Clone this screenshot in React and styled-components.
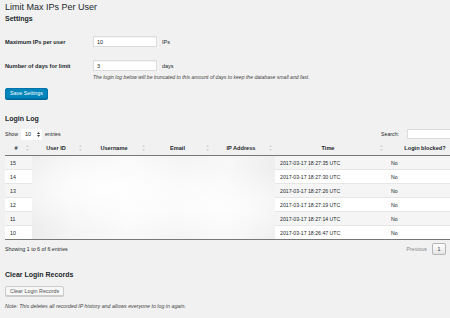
import React from "react";
import styled, { createGlobalStyle } from "styled-components";

const GlobalStyle = createGlobalStyle`
	body {
		margin: 0;
		background: #f1f1f1;
		overflow: hidden;
		font-family: "Liberation Sans", Arial, sans-serif;
		color: #23282d;
	}
`;

const Page = styled.div`
	width: 465px;
	padding-left: 5px;
`;

const Title = styled.h1`
	margin: 1px 0 0;
	font-size: 9px;
	font-weight: 400;
	line-height: 12px;
`;

const SectionTitle = styled.h2`
	margin: ${(p) => p.$top}px 0 0;
	font-size: 7px;
	font-weight: 700;
	line-height: 9px;
`;

const FormRow = styled.div`
	display: flex;
	align-items: center;
	height: 11px;
	margin-top: 13px;
	font-size: 5.5px;
`;

const Label = styled.label`
	width: 88px;
	font-weight: 700;
	font-size: 5.7px;
`;

const TextInput = styled.div`
	box-sizing: border-box;
	width: 64px;
	height: 11px;
	padding: 0 3px;
	background: #fff;
	border: 1px solid #ddd;
	box-shadow: inset 0 1px 1px rgba(0, 0, 0, 0.05);
	display: flex;
	align-items: center;
`;

const Unit = styled.span`
	margin-left: 5px;
`;

const Hint = styled.p`
	margin: 3px 0 0;
	padding-left: 88px;
	font-size: 5.1px;
	font-style: italic;
	line-height: 6px;
	color: #444;
`;

const PrimaryButton = styled.button`
	display: block;
	box-sizing: border-box;
	margin-top: 8px;
	height: 11px;
	padding: 0 4px;
	background: #0085ba;
	border: 1px solid #0073aa;
	border-radius: 2px;
	box-shadow: 0 1px 0 #006799;
	color: #fff;
	font-family: inherit;
	font-size: 5.35px;
	line-height: 9px;
`;

const Controls = styled.div`
	display: flex;
	justify-content: space-between;
	align-items: center;
	width: 464px;
	height: 12px;
	margin-top: 5px;
	font-size: 5.2px;
`;

const Inline = styled.div`
	display: flex;
	align-items: center;
`;

const SelectBox = styled.div`
	box-sizing: border-box;
	width: 21px;
	height: 11px;
	margin: 0 3px;
	padding: 0 2px 0 4px;
	background: #fff;
	border-radius: 2px;
	display: flex;
	align-items: center;
	justify-content: space-between;
	font-size: 5.5px;
`;

const SearchInput = styled.div`
	box-sizing: border-box;
	width: 62px;
	height: 10px;
	margin-left: 8px;
	background: #fff;
	border: 1px solid #ddd;
`;

const Table = styled.table`
	margin-top: 1px;
	width: 464px;
	border-collapse: separate;
	border-spacing: 0;
	table-layout: fixed;
	font-size: 5.2px;
`;

const Th = styled.th`
	box-sizing: border-box;
	width: ${(p) => p.$w}px;
	height: 15px;
	padding: 0 3px;
	border-bottom: 1px solid #777;
	font-size: 5.6px;
	font-weight: 700;
`;

const HeadInner = styled.div`
	display: grid;
	grid-template-columns: 1fr auto;
	align-items: center;
	white-space: nowrap;
`;

const Td = styled.td`
	height: 13px;
	padding: 0 5px;
	background: ${(p) => (p.$odd ? "#f5f5f5" : "#fff")};
	border-bottom: 1px solid ${(p) => (p.$last ? "#777" : "#e6e6e6")};
	white-space: nowrap;
`;

const Blurred = styled.td`
	padding: 0;
	border-bottom: 1px solid #777;
	background:
		radial-gradient(ellipse at 30% 40%, rgba(255, 255, 255, 0.9), rgba(255, 255, 255, 0) 60%),
		radial-gradient(ellipse at 75% 60%, rgba(255, 255, 255, 0.8), rgba(255, 255, 255, 0) 55%),
		linear-gradient(90deg, #ececec, #f4f4f4 15%, #f9f9f9 40%, #f3f3f3 60%, #f8f8f8 80%, #eeeeee);
`;

const Footer = styled.div`
	display: flex;
	justify-content: space-between;
	align-items: center;
	width: 441px;
	height: 12px;
	margin-top: 3px;
	font-size: 5.3px;
`;

const Pager = styled.div`
	display: flex;
	align-items: center;
	gap: 5px;
	color: #888;
`;

const PageButton = styled.span`
	box-sizing: border-box;
	width: 14px;
	height: 12px;
	display: flex;
	align-items: center;
	justify-content: center;
	border: 1px solid #b5b5b5;
	border-radius: 2px;
	background: linear-gradient(#fff, #e4e4e4);
	color: #333;
`;

const SecondaryButton = styled.button`
	display: block;
	box-sizing: border-box;
	margin-top: 7px;
	height: 10px;
	padding: 0 4px;
	background: #f7f7f7;
	border: 1px solid #ccc;
	border-radius: 2px;
	box-shadow: 0 1px 0 #ccc;
	color: #555;
	font-family: inherit;
	font-size: 5.4px;
	line-height: 8px;
`;

const Note = styled.p`
	margin: 7px 0 0;
	font-size: 5.3px;
	font-style: italic;
	line-height: 6px;
	color: #444;
`;

const SortIcon = () => (
	<svg width="3" height="6" viewBox="0 0 6 12" style={{ marginLeft: 2 }}>
		<path d="M3 0 L6 4 L0 4 Z M3 12 L6 8 L0 8 Z" fill="#d4d4d4" />
	</svg>
);

const SelectArrows = () => (
	<svg width="3" height="5" viewBox="0 0 6 10">
		<path d="M3 0 L6 4 L0 4 Z M3 10 L6 6 L0 6 Z" fill="#333" />
	</svg>
);

const columns = [
	{ label: "#", w: 27 },
	{ label: "User ID", w: 53 },
	{ label: "Username", w: 63 },
	{ label: "Email", w: 64 },
	{ label: "IP Address", w: 63 },
	{ label: "Time", w: 111 },
	{ label: "Login blocked?", w: 83 },
];

const rows = [
	{ id: 15, time: "2017-03-17 18:27:35 UTC" },
	{ id: 14, time: "2017-03-17 18:27:30 UTC" },
	{ id: 13, time: "2017-03-17 18:27:26 UTC" },
	{ id: 12, time: "2017-03-17 18:27:19 UTC" },
	{ id: 11, time: "2017-03-17 18:27:14 UTC" },
	{ id: 10, time: "2017-03-17 18:26:47 UTC" },
];

export default function App() {
	return (
		<Page>
			<GlobalStyle />
			<Title>Limit Max IPs Per User</Title>
			<SectionTitle $top={1}>Settings</SectionTitle>

			<FormRow>
				<Label>Maximum IPs per user</Label>
				<TextInput>10</TextInput>
				<Unit>IPs</Unit>
			</FormRow>
			<FormRow>
				<Label>Number of days for limit</Label>
				<TextInput>3</TextInput>
				<Unit>days</Unit>
			</FormRow>
			<Hint>
				The login log below will be truncated to this amount of days to keep the
				database small and fast.
			</Hint>
			<PrimaryButton>Save Settings</PrimaryButton>

			<SectionTitle $top={15}>Login Log</SectionTitle>
			<Controls>
				<Inline>
					Show
					<SelectBox>
						10
						<SelectArrows />
					</SelectBox>
					entries
				</Inline>
				<Inline>
					Search:
					<SearchInput />
				</Inline>
			</Controls>

			<Table>
				<thead>
					<tr>
						{columns.map((c) => (
							<Th key={c.label} $w={c.w}>
								<HeadInner>
									<span>{c.label}</span>
									<SortIcon />
								</HeadInner>
							</Th>
						))}
					</tr>
				</thead>
				<tbody>
					{rows.map((r, i) => {
						const odd = i % 2 === 0;
						const last = i === rows.length - 1;
						return (
							<tr key={r.id}>
								<Td $odd={odd} $last={last}>
									{r.id}
								</Td>
								{i === 0 && <Blurred rowSpan={rows.length} colSpan={4} />}
								<Td $odd={odd} $last={last}>
									{r.time}
								</Td>
								<Td $odd={odd} $last={last}>
									No
								</Td>
							</tr>
						);
					})}
				</tbody>
			</Table>

			<Footer>
				<span>Showing 1 to 6 of 6 entries</span>
				<Pager>
					Previous
					<PageButton>1</PageButton>
				</Pager>
			</Footer>

			<SectionTitle $top={15}>Clear Login Records</SectionTitle>
			<SecondaryButton>Clear Login Records</SecondaryButton>
			<Note>
				Note: This deletes all recorded IP history and allows everyone to log in
				again.
			</Note>
		</Page>
	);
}
